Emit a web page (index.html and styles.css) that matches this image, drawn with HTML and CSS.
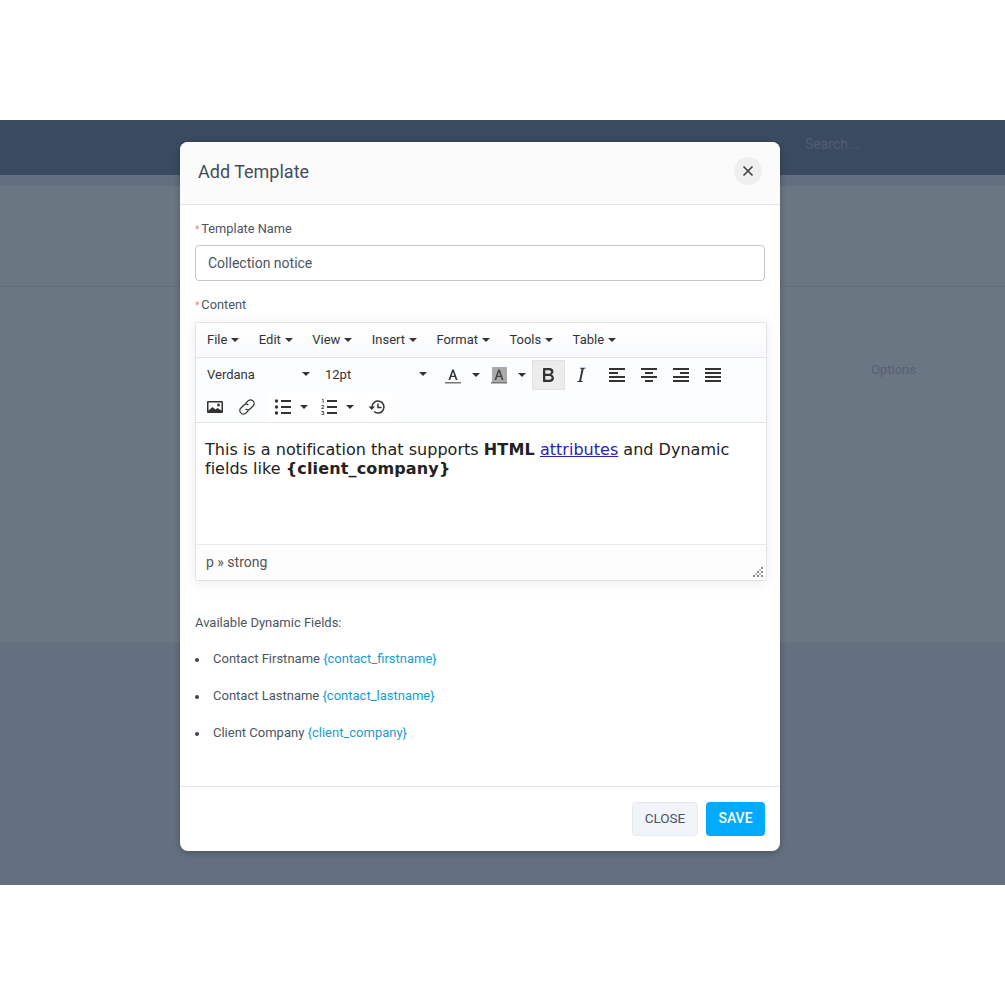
FILE: index.html
```html
<!DOCTYPE html>
<html lang="en">
<head>
    <meta charset="UTF-8">
    <title>Add Template</title>
    <link rel="stylesheet" href="styles.css">
</head>
<body>
    <div class="page">
        <header class="topbar"><span class="topbar-search">Search...</span></header>
        <div class="subbar"></div>
        <div class="page-title"></div>
        <div class="page-panel"><span class="panel-options">Options</span></div>
        <div class="page-bottom"></div>

        <div class="modal">
            <div class="modal-header">
                <h2>Add Template</h2>
                <button class="modal-close">
                    <svg width="12" height="12" viewBox="0 0 12 12"><path d="M1.500 1.500l9 9M10.500 1.500l-9 9" stroke="#444" stroke-width="1.700" fill="none"/></svg>
                </button>
            </div>

            <div class="modal-body">
                <label class="field-label">Template Name</label>
                <input class="field-input" type="text" value="Collection notice">

                <label class="field-label content-label">Content</label>
                <div class="editor">
                    <div class="menubar">
                        <span class="menu-item">File<i class="caret"></i></span>
                        <span class="menu-item">Edit<i class="caret"></i></span>
                        <span class="menu-item">View<i class="caret"></i></span>
                        <span class="menu-item">Insert<i class="caret"></i></span>
                        <span class="menu-item">Format<i class="caret"></i></span>
                        <span class="menu-item">Tools<i class="caret"></i></span>
                        <span class="menu-item">Table<i class="caret"></i></span>
                    </div>
                    <div class="toolbar">
                        <div class="tool-row">
                            <span class="select">Verdana<i class="caret"></i></span>
                            <span class="select">12pt<i class="caret"></i></span>
                            <span class="tool tool-split color-tool">
                                <svg width="24" height="24" viewBox="0 0 24 24"><path d="M7.500 17L11.200 6.500h1.600L16.500 17h-1.700l-1-2.900H10.200l-1 2.900zM10.700 12.700h2.600L12 8.800z" fill="#333"/><rect x="4" y="19" width="16" height="1.500" fill="#777"/></svg>
                                <i class="caret"></i>
                            </span>
                            <span class="tool tool-split color-tool">
                                <svg width="24" height="24" viewBox="0 0 24 24"><rect x="5" y="4" width="15" height="15" fill="#aaa"/><path d="M7.500 17L11.200 6.500h1.600L16.500 17h-1.700l-1-2.900H10.200l-1 2.900zM10.700 12.700h2.600L12 8.800z" fill="#444"/><rect x="4" y="19" width="16" height="1.500" fill="#777"/></svg>
                                <i class="caret"></i>
                            </span>
                            <span class="tool tool-active">
                                <svg width="24" height="24" viewBox="0 0 24 24"><path d="M7.800 19c-.3 0-.5 0-.6-.2l-.2-.5V5.700c0-.2 0-.4.2-.5l.6-.2h5c1.500 0 2.700.3 3.500 1 .7.600 1.100 1.400 1.100 2.500a3 3 0 0 1-.6 1.900c-.4.600-1 1-1.600 1.200.4.100.9.300 1.300.600s.8.700 1 1.200c.3.400.4 1 .4 1.600 0 1.300-.4 2.300-1.300 3-.8.700-2.100 1-3.800 1H7.800zm5-8.300c.6 0 1.200-.1 1.600-.5.400-.3.600-.7.600-1.300 0-1.100-.8-1.700-2.300-1.700H9.300v3.500h3.500zm.5 6c.7 0 1.300-.1 1.700-.4.400-.4.600-.9.600-1.500s-.2-1-.7-1.400c-.4-.3-1-.4-2-.4H9.300v3.700h4z" fill="#333" fill-rule="evenodd" transform="translate(-1 0)"/></svg>
                            </span>
                            <span class="tool">
                                <svg width="24" height="24" viewBox="0 0 24 24"><path d="M16.700 4.700l-.1.900h-.3c-.6 0-1 0-1.400.3-.3.300-.4.600-.5 1.100l-2.100 9.800v.6c0 .5.400.8 1.400.8h.2l-.2.800H8l.2-.8h.2c1.100 0 1.800-.5 2-1.500l2-9.800.1-.5c0-.6-.4-.8-1.400-.8h-.3l.2-.9h5.800z" fill="#333"/></svg>
                            </span>
                            <span class="tool tool-first-align">
                                <svg width="24" height="24" viewBox="0 0 24 24"><path d="M4 5h16v2H4zM4 9h9v2H4zM4 13h16v2H4zM4 17h16v2H4z" fill="#333"/></svg>
                            </span>
                            <span class="tool">
                                <svg width="24" height="24" viewBox="0 0 24 24"><path d="M4 5h16v2H4zM8 9h8v2H8zM4 13h16v2H4zM8 17h8v2H8z" fill="#333"/></svg>
                            </span>
                            <span class="tool">
                                <svg width="24" height="24" viewBox="0 0 24 24"><path d="M4 5h16v2H4zM11 9h9v2h-9zM4 13h16v2H4zM4 17h16v2H4z" fill="#333"/></svg>
                            </span>
                            <span class="tool">
                                <svg width="24" height="24" viewBox="0 0 24 24"><path d="M4 5h16v2H4zM4 9h16v2H4zM4 13h16v2H4zM4 17h16v2H4z" fill="#333"/></svg>
                            </span>
                        </div>
                        <div class="tool-row">
                            <span class="tool">
                                <svg width="24" height="24" viewBox="0 0 24 24"><path d="M5 6h14a1 1 0 0 1 1 1v10a1 1 0 0 1-1 1H5a1 1 0 0 1-1-1V7a1 1 0 0 1 1-1zm.500 1.500v8l4-3.500 3 2.500 2-1.500 4 2.500v-8z" fill="#333" fill-rule="evenodd"/><circle cx="15.500" cy="10" r="1.400" fill="#333"/></svg>
                            </span>
                            <span class="tool">
                                <svg width="24" height="24" viewBox="0 0 24 24"><g fill="none" stroke="#333" stroke-width="1.200"><path d="M10.500 8.500l2.800-2.800a3.100 3.100 0 0 1 4.400 0l.6.600a3.100 3.100 0 0 1 0 4.400l-3.300 3.300a3.100 3.100 0 0 1-4.400 0"/><path d="M13.500 15.500l-2.800 2.800a3.100 3.100 0 0 1-4.400 0l-.6-.6a3.100 3.100 0 0 1 0-4.400l3.300-3.300a3.100 3.100 0 0 1 4.400 0"/></g></svg>
                            </span>
                            <span class="tool tool-split list-tool list-first">
                                <svg width="24" height="24" viewBox="0 0 24 24"><path d="M10 5h10v2H10zM10 11h10v2H10zM10 17h10v2H10z" fill="#333"/><circle cx="5.500" cy="6" r="1.700" fill="#333"/><circle cx="5.500" cy="12" r="1.700" fill="#333"/><circle cx="5.500" cy="18" r="1.700" fill="#333"/></svg>
                                <i class="caret"></i>
                            </span>
                            <span class="tool tool-split list-tool">
                                <svg width="24" height="24" viewBox="0 0 24 24"><path d="M10 5h10v2H10zM10 11h10v2H10zM10 17h10v2H10z" fill="#333"/><path d="M5 4.500h1.200V8M4.500 10.500h2.200v1.300l-2.200 1.700h2.300M4.500 16.500h2.300l-1 1.200h1v1.800H4.500" fill="none" stroke="#333" stroke-width=".8"/></svg>
                                <i class="caret"></i>
                            </span>
                            <span class="tool tool-history">
                                <svg width="24" height="24" viewBox="0 0 24 24"><path d="M7 12a6 6 0 1 1 2 4.500" fill="none" stroke="#333" stroke-width="1.500"/><path d="M3.500 11.500h6.500L6.800 15z" fill="#333"/><path d="M13 8.500V12.500h3.500" fill="none" stroke="#333" stroke-width="1.500"/></svg>
                            </span>
                        </div>
                    </div>
                    <div class="editor-content">
                        <p>This is a notification that supports <strong>HTML</strong> <a href="#">attributes</a> and Dynamic fields like <strong>{client_company}</strong></p>
                    </div>
                    <div class="statusbar">
                        <span>p » strong</span>
                        <svg class="resize-grip" width="10" height="10" viewBox="0 0 10 10"><path d="M8 0h2v2H8zM4 4h2v2H4zM8 4h2v2H8zM0 8h2v2H0zM4 8h2v2H4zM8 8h2v2H8z" fill="#888"/><path d="M6 2h2v2H6zM2 6h2v2H2zM6 6h2v2H6z" fill="#bbb"/></svg>
                    </div>
                </div>

                <p class="fields-title">Available Dynamic Fields:</p>
                <ul class="fields-list">
                    <li>Contact Firstname <a href="#">{contact_firstname}</a></li>
                    <li>Contact Lastname <a href="#">{contact_lastname}</a></li>
                    <li>Client Company <a href="#">{client_company}</a></li>
                </ul>
            </div>

            <div class="modal-footer">
                <button class="btn btn-close">CLOSE</button>
                <button class="btn btn-save">SAVE</button>
            </div>
        </div>
    </div>
</body>
</html>
```

FILE: styles.css
```css
* {
    box-sizing: border-box;
}
body {
    margin: 0;
    background: #fff;
    font-family: Roboto, "Liberation Sans", sans-serif;
    color: #444d5c;
}

.page {
    position: relative;
    margin-top: 120px;
    height: 765px;
    display: flex;
    flex-direction: column;
}
.topbar {
    height: 55px;
    background: #3a4a60;
    padding: 14px 0 0 805px;
}
.topbar-search {
    font-size: 14px;
    color: #505e74;
}
.subbar {
    height: 11px;
    background: #616e7e;
}
.page-title {
    height: 101px;
    background: #6b7683;
    border-bottom: 1px solid #646f7d;
}
.page-panel {
    height: 355px;
    background: #6b7683;
    padding: 72px 0 0 871px;
}
.panel-options {
    font-size: 13px;
    color: #536073;
}
.page-bottom {
    flex: 1;
    background: #63707f;
}

.modal {
    position: absolute;
    left: 180px;
    top: 22px;
    width: 600px;
    height: 709px;
    background: #fff;
    border-radius: 8px;
    box-shadow: 0 2px 6px rgba(0, 0, 0, 0.25);
    display: flex;
    flex-direction: column;
    overflow: hidden;
}
.modal-header {
    height: 63px;
    flex: none;
    display: flex;
    align-items: center;
    justify-content: space-between;
    padding: 0 18px 4px;
    background: #fbfbfb;
    border-bottom: 1px solid #e4e5e7;
}
.modal-header h2 {
    margin: 0;
    font-size: 18px;
    font-weight: 400;
    color: #444d5c;
}
.modal-close {
    width: 28px;
    height: 28px;
    padding: 0;
    border: none;
    border-radius: 50%;
    background: #efefef;
    display: flex;
    align-items: center;
    justify-content: center;
}

.modal-body {
    flex: 1;
    padding: 15px 15px 0;
}
.field-label {
    display: block;
    font-size: 12.800px;
    line-height: 17px;
    color: #4c5563;
}
.field-label::before {
    content: "*";
    font-size: 10px;
    color: #f27a9a;
    margin-right: 2px;
}
.content-label {
    margin-top: 15px;
}
.field-input {
    display: block;
    width: 100%;
    height: 36px;
    margin-top: 7px;
    padding: 0 12px;
    border: 1px solid #c4c6ce;
    border-radius: 4px;
    font-family: inherit;
    font-size: 14px;
    color: #4c5563;
}

.editor {
    width: 572px;
    height: 259px;
    margin-top: 8px;
    border: 1px solid #e3e3e3;
    border-radius: 2px;
    box-shadow: 0 2px 14px rgba(0, 0, 0, 0.08);
    display: flex;
    flex-direction: column;
    font-size: 14px;
    color: #333;
}
.menubar {
    height: 35px;
    flex: none;
    display: flex;
    align-items: center;
    gap: 19.400px;
    padding: 0 11px 2px;
    background: linear-gradient(#fff, #f8f9fc);
    border-bottom: 1px solid #e3e3e3;
    font-size: 13px;
}
.caret {
    display: inline-block;
    width: 0;
    height: 0;
    margin-left: 4px;
    vertical-align: middle;
    border-left: 4px solid transparent;
    border-right: 4px solid transparent;
    border-top: 4px solid #333;
}
.toolbar {
    height: 65px;
    flex: none;
    padding: 2px 3px 0;
    background: #fcfdfe;
    border-bottom: 1px solid #e3e3e3;
}
.tool-row {
    height: 32px;
    display: flex;
    align-items: flex-start;
}
.select {
    width: 118px;
    height: 29px;
    display: flex;
    align-items: center;
    justify-content: space-between;
    padding: 0 3px 1px 8px;
    font-size: 13px;
}
.select .caret {
    margin-right: 4px;
}
.select + .select {
    margin-right: 2px;
}
.select + .select .caret {
    margin-right: 5px;
}
.tool {
    width: 32px;
    height: 30px;
    display: flex;
    align-items: center;
    justify-content: center;
    flex: none;
}
.tool-split {
    gap: 3px;
}
.color-tool {
    width: 46px;
}
.color-tool + .color-tool {
    margin-right: 3px;
}
.list-tool {
    width: 46px;
    gap: 1px;
    padding-right: 2px;
    background: #fff;
}
.list-first {
    margin-left: 4px;
}
.tool-active {
    width: 33px;
    background: #ececec;
    border: 1px solid #e2e2e2;
}
.tool-first-align {
    margin-left: 4px;
}
.tool-history {
    margin-left: 2px;
    background: #fff;
}
.editor-content {
    height: 121px;
    flex: none;
    padding: 17px 9px 0;
    background: #fff;
    font-family: "DejaVu Sans", Verdana, sans-serif;
    font-size: 16px;
    line-height: 19px;
    letter-spacing: 0.02px;
    color: #222;
}
.editor-content p {
    margin: 0;
}
.editor-content strong {
    letter-spacing: 0.15px;
}
.editor-content a {
    color: #2a23b5;
}
.statusbar {
    flex: 1;
    display: flex;
    align-items: center;
    justify-content: space-between;
    padding: 0 3px 2px 10px;
    background: #fdfdfe;
    border-top: 1px solid #e9e9e9;
    font-size: 14px;
    color: #555;
}
.resize-grip {
    align-self: flex-end;
    margin-bottom: 1px;
}

.fields-title {
    margin: 33px 0 0;
    font-size: 13px;
    line-height: 17px;
    color: #4c5563;
}
.fields-list {
    margin: 19px 0 0;
    padding: 0;
    list-style: none;
    font-size: 13px;
    line-height: 17px;
    color: #4c5563;
}
.fields-list li::before {
    content: "";
    display: inline-block;
    width: 4px;
    height: 4px;
    margin-right: 14px;
    border-radius: 50%;
    vertical-align: middle;
    background: #3c4452;
}
.fields-list li + li {
    margin-top: 20px;
}
.fields-list a {
    color: #1a9bd0;
    text-decoration: none;
}

.modal-footer {
    height: 65px;
    flex: none;
    display: flex;
    justify-content: flex-end;
    gap: 8px;
    padding: 15px 15px 0;
    border-top: 1px solid #e6e6e8;
}
.btn {
    height: 34px;
    border-radius: 4px;
    font-family: inherit;
    font-size: 13.500px;
    padding: 0 0 2px;
}
.btn-close {
    width: 66px;
    background: #f1f4f8;
    border: 1px solid #e6e9ee;
    color: #4c5563;
}
.btn-save {
    width: 59px;
    background: #00aaff;
    border: none;
    color: #fff;
    font-size: 14px;
    font-weight: 500;
}
```
